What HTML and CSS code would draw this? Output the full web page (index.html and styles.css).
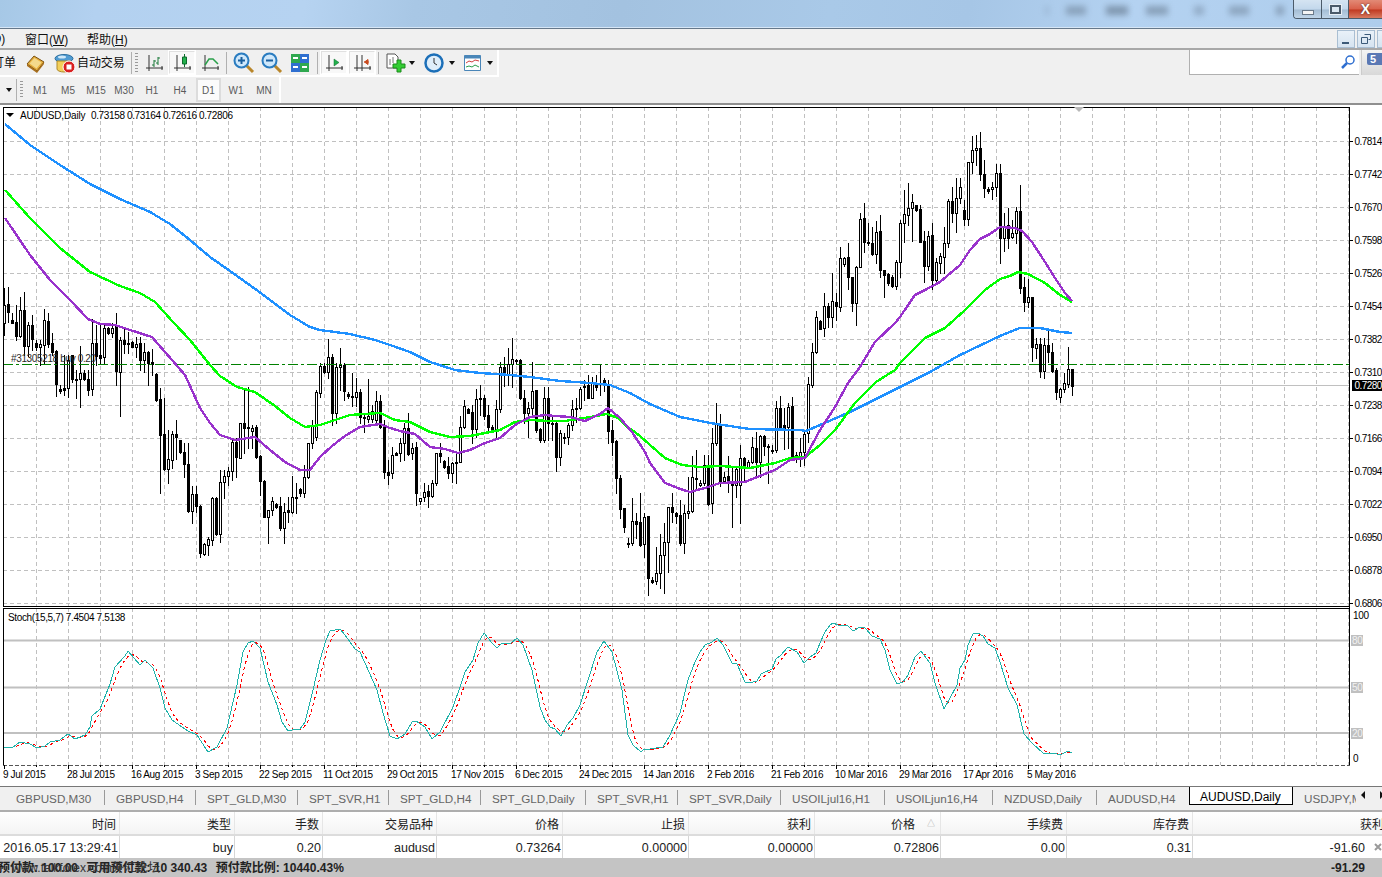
FILE: index.html
```html
<!DOCTYPE html>
<html lang="zh">
<head>
<meta charset="utf-8">
<title>AUDUSD,Daily</title>
<link rel="stylesheet" href="styles.css">
</head>
<body>
<header class="titlebar">
  <div class="blurs"><i class="b1"></i><i class="b2"></i><i class="b3"></i><i class="b4"></i><i class="b5"></i><i class="b6"></i><i class="b7"></i></div>
  <div class="winbtns">
    <span class="winbtn min"><i></i></span>
    <span class="winbtn max"><i></i></span>
    <span class="winbtn close">X</span>
  </div>
</header>
<nav class="menubar">
  <span class="menu-cut">(O)</span>
  <span class="menu-item">窗口(<u>W</u>)</span>
  <span class="menu-item">帮助(<u>H</u>)</span>
  <div class="mdi">
    <span class="mdibtn"><svg width="12" height="12" viewBox="0 0 12 12"><path d="M2 9h7v2H2z" fill="#3c5a78"/></svg></span>
    <span class="mdibtn"><svg width="12" height="12" viewBox="0 0 12 12"><path d="M4.5 1.5h6v5h-2M1.5 4.5h6v6h-6z" fill="none" stroke="#3c5a78"/></svg></span>
    <span class="mdibtn"></span>
  </div>
</nav>
<div class="toolbar">
  <div class="tools">
    <span class="order">订单</span>
    <span class="ico book"><svg width="20" height="20" viewBox="0 0 20 20"><path d="M1 11 8 3l10 6-7 9z" fill="#e5ad3c" stroke="#7a5212"/><path d="M3.500 10.500 8.500 5l7 4.500-5 6z" fill="#f4d98c"/><path d="M1 11l10 7 7-9v2l-7 9-10-7z" fill="#a86f1e"/></svg></span>
    <span class="ico auto"><svg width="22" height="22" viewBox="0 0 22 22"><ellipse cx="10" cy="6.500" rx="9" ry="4" fill="#4f9bd2" stroke="#2c6f9f"/><path d="M3 9h14v8a7 3 0 0 1-14 0z" fill="#f3cf5a" stroke="#b08a28"/><ellipse cx="8" cy="5" rx="4" ry="1.500" fill="#cfe8f8"/><circle cx="15" cy="15" r="6" fill="#d92020" stroke="#fff"/><path d="M12.500 12.500h5v5h-5z" fill="#fff"/></svg></span>
    <span class="auto-text">自动交易</span>
    <i class="sep s6"></i>
    <i class="grip"></i>
    <span class="tool"><svg width="22" height="22" viewBox="0 0 22 22"><path d="M6 3v16M3 16h17M19 14v4" fill="none" stroke="#333"/><path d="M11 8v7M9 13h2M11 9h2M15 5v8M13 11h2M15 6h2" fill="none" stroke="#1d7a3a"/></svg></span>
    <span class="tool on"><svg width="22" height="22" viewBox="0 0 22 22"><path d="M6 3v16M3 16h17M19 14v4" fill="none" stroke="#333"/><path d="M13.500 2v13" stroke="#0d6a2d"/><path d="M11.500 5h4v7h-4z" fill="#22b14c" stroke="#0d6a2d"/></svg></span>
    <span class="tool"><svg width="22" height="22" viewBox="0 0 22 22"><path d="M6 3v16M3 16h17M19 14v4" fill="none" stroke="#333"/><path d="M6 13 10 7l4 0 5 5" fill="none" stroke="#2aa04a" stroke-width="1.500"/></svg></span>
    <i class="sep s2 wide-after"></i>
    <span class="tool"><svg width="24" height="24" viewBox="0 0 24 24"><path d="m14 14 7 7" stroke="#b9862a" stroke-width="3"/><circle cx="9.500" cy="9.500" r="7" fill="#cfe8fb" stroke="#2a7cc0" stroke-width="2"/><path d="M6 9.500h7M9.500 6v7" stroke="#1a5f9e" stroke-width="2"/></svg></span>
    <span class="tool"><svg width="24" height="24" viewBox="0 0 24 24"><path d="m14 14 7 7" stroke="#b9862a" stroke-width="3"/><circle cx="9.500" cy="9.500" r="7" fill="#cfe8fb" stroke="#2a7cc0" stroke-width="2"/><path d="M6 9.500h7" stroke="#1a5f9e" stroke-width="2"/></svg></span>
    <span class="tool"><svg width="20" height="20" viewBox="0 0 20 20"><path d="M1 1h9v9H1z" fill="#2fa84f"/><path d="M10 1h9v9h-9z" fill="#2f6fd0"/><path d="M1 10h9v9H1z" fill="#2f6fd0"/><path d="M10 10h9v9h-9z" fill="#2fa84f"/><path d="M3 4h5v2H3zM12 4h5v2h-5zM3 13h5v2H3zM12 13h5v2h-5z" fill="#fff"/></svg></span>
    <i class="sep s3"></i>
    <span class="tool on"><svg width="22" height="22" viewBox="0 0 22 22"><path d="M6 3v16M3 16h17M19 14v4" fill="none" stroke="#333"/><path d="M11 7v7l5-3.500z" fill="#22b14c" stroke="#0d6a2d" stroke-width=".5"/></svg></span>
    <span class="tool on"><svg width="22" height="22" viewBox="0 0 22 22"><path d="M6 3v16M3 16h17M19 14v4M11 3v16" fill="none" stroke="#333"/><path d="M13 10h5M17 7.500l-3.500 2.500 3.500 2.500z" fill="#c84a1e" stroke="#c84a1e"/></svg></span>
    <i class="sep s2"></i>
    <span class="tool drop d1"><svg width="22" height="22" viewBox="0 0 22 22"><path d="M2 2h8l3 3v11H2z" fill="#fff" stroke="#555"/><path d="M5 7v6M8 5v6" stroke="#777"/><path d="M12 8h4v4h4v4h-4v4h-4v-4H8v-4h4z" fill="#32cd32" stroke="#1c8a1c"/></svg><i class="caret"></i></span>
    <span class="tool drop d2"><svg width="20" height="20" viewBox="0 0 20 20"><circle cx="10" cy="10" r="8.500" fill="#dfeefa" stroke="#1c6fb8" stroke-width="2.500"/><path d="M10 5v5l3 2" fill="none" stroke="#333"/></svg><i class="caret"></i></span>
    <span class="tool drop d3"><svg width="20" height="20" viewBox="0 0 20 20"><path d="M1.500 2.500h16v15h-16z" fill="#fff" stroke="#4a86b8"/><path d="M1.500 2.500h16v3h-16z" fill="#4a86b8"/><path d="M3 10l3-2 3 1 3-2 4 1" fill="none" stroke="#d04040"/><path d="M3 14l3-1 3 1 3-2 4 2" fill="none" stroke="#2aa04a"/></svg><i class="caret"></i></span>
  </div>
  <div class="search"><svg width="16" height="16" viewBox="0 0 16 16"><circle cx="10" cy="6" r="4" fill="none" stroke="#2f6fd0" stroke-width="1.500"/><path d="m7 9-5 5" stroke="#2f6fd0" stroke-width="2.500"/></svg></div>
  <div class="badge"><span>5</span></div>
</div>
<div class="periods">
  <div class="period-group">
    <i class="caret wide"></i>
    <i class="sep s7"></i>
    <i class="grip small"></i>
    <span class="period">M1</span>
    <span class="period">M5</span>
    <span class="period">M15</span>
    <span class="period">M30</span>
    <span class="period">H1</span>
    <span class="period">H4</span>
    <span class="period on">D1</span>
    <span class="period">W1</span>
    <span class="period">MN</span>
  </div>
</div>
<main id="chart" class="chart"></main>
<div class="tabbar">
  <div class="tabs">
    <span class="tab w100">GBPUSD,M30</span>
    <span class="tab w91">GBPUSD,H4</span>
    <span class="tab w102">SPT_GLD,M30</span>
    <span class="tab w91">SPT_SVR,H1</span>
    <span class="tab w92">SPT_GLD,H4</span>
    <span class="tab w105">SPT_GLD,Daily</span>
    <span class="tab w92">SPT_SVR,H1</span>
    <span class="tab w103">SPT_SVR,Daily</span>
    <span class="tab w104">USOILjul16,H1</span>
    <span class="tab w108">USOILjun16,H4</span>
    <span class="tab w104">NZDUSD,Daily</span>
    <span class="tab w92 last">AUDUSD,H4</span>
    <span class="tab active">AUDUSD,Daily</span>
    <span class="tab">USDJPY,M30</span>
  </div>
  <div class="tabnav"><i class="arrow-l"></i><i class="arrow-r"></i></div>
</div>
<section class="table">
  <div class="thead">
    <span>时间</span><span>类型</span><span>手数</span><span>交易品种</span><span>价格</span><span>止损</span><span>获利</span><span class="sorted">价格<i>△</i></span><span>手续费</span><span>库存费</span><span class="lastcol">获利</span>
  </div>
  <div class="trow">
    <span>2016.05.17 13:29:41</span><span>buy</span><span>0.20</span><span>audusd</span><span>0.73264</span><span>0.00000</span><span>0.00000</span><span>0.72806</span><span>0.00</span><span>0.31</span><span class="profit">-91.60</span>
    <svg class="closex" width="8" height="8" viewBox="0 0 8 8"><path d="m1 1 6 6M7 1 1 7" stroke="#9a9a9a" stroke-width="2"/></svg>
  </div>
</section>
<footer class="status">
  <span class="balance">预付款: 100.00</span>
  <span class="balance">可用预付款: 10 340.43</span>
  <span class="balance third">预付款比例: 10440.43%</span>
  <span class="watermark">www.talkforex.com外汇论坛</span>
  <span class="total">-91.29</span>
</footer>
<script src="chart.js"></script>
</body>
</html>
```
FILE: styles.css
```css
* { box-sizing: border-box; }
html, body { margin: 0; padding: 0; width: 1382px; height: 877px; overflow: hidden; background: #f0f0f0; }
body { font: 12px "Liberation Sans", "Noto Sans CJK SC", sans-serif; color: #111; display: flex; flex-direction: column; }
i { display: block; font-style: normal; }

.titlebar { height: 29px; flex: none; display: flex; align-items: flex-start; border-bottom: 1px solid #66788a; box-shadow: inset 0 -1px 0 #d6e6f6;
  background: linear-gradient(100deg, #a6c8e6 0%, #b3d1f0 7%, #b6d3f1 22%, #a8c7e5 30%, #a3c2e0 45%, #a9c9e8 60%, #a6c6e6 70%, #b4d2f1 82%, #aecdec 100%); }
.blurs { display: flex; margin-left: 1045px; margin-top: 6px; width: 248px; flex: none; }
.blurs i { height: 9px; background: #7c93ab; filter: blur(3px); flex: none; }
.b1 { width: 4px; opacity: .35; }
.b2 { width: 20px; margin-left: 17px; opacity: .75; }
.b3 { width: 22px; margin-left: 20px; opacity: .95; }
.b4 { width: 22px; margin-left: 18px; opacity: .8; }
.b5 { width: 10px; margin-left: 26px; opacity: .6; }
.b6 { width: 20px; margin-left: 25px; opacity: .7; }
.b7 { width: 8px; margin-left: 27px; opacity: .8; }
.winbtns { display: flex; flex: none; height: 19px; width: 89px; border: 1px solid #4c5b6a; border-top: 0; border-right: 0; border-radius: 0 0 0 4px; overflow: hidden; }
.winbtn { display: flex; align-items: center; justify-content: center; height: 18px; border-right: 1px solid #4c5b6a; background: linear-gradient(#d5e4f2, #c3d8ec 50%, #a4bdd4 55%, #c0d5e8); }
.min { width: 28px; }
.min i { width: 12px; height: 5px; margin-top: 6px; background: #f4f4f4; border: 1px solid #6a7a8a; }
.max { width: 27px; }
.max i { width: 11px; height: 9px; background: #dbe7f2; border: 2px solid #4a5a6a; box-shadow: 0 0 0 1px #e8eff6; }
.close { flex: 1; border: 0; color: #fff; font: bold 14px "Liberation Sans", sans-serif; text-shadow: 0 0 2px #333; background: linear-gradient(#e28a76, #d9604a 50%, #c03a22 55%, #d97a60); }

.menubar { height: 21px; flex: none; display: flex; align-items: center; border-bottom: 2px solid #a8a8a8; }
.menu-cut { margin-left: -12px; width: 37px; flex: none; }
.menu-item { width: 62px; flex: none; white-space: nowrap; }
.mdi { margin-left: auto; display: flex; gap: 2px; width: 45px; flex: none; margin-right: 0; height: 18px; align-self: flex-start; margin-top: 1px; }
.mdibtn { width: 18px; height: 18px; flex: none; border: 1px solid #a9bed2; background: linear-gradient(#e9f1f8, #d6e4f1); display: flex; align-items: center; justify-content: center; }

.toolbar { height: 27px; flex: none; display: flex; align-items: flex-start; }
.tools { width: 499px; height: 27px; flex: none; display: flex; align-items: center; border-right: 2px solid #fff; border-bottom: 2px solid #fff; }
.order { margin-left: -8px; width: 24px; flex: none; padding-bottom: 2px; }
.ico { display: flex; align-items: center; justify-content: center; flex: none; height: 22px; }
.book { width: 20px; margin-left: 10px; }
.auto { width: 22px; margin-left: 8px; }
.auto-text { margin-left: 1px; width: 48px; flex: none; white-space: nowrap; letter-spacing: -.1px; padding-bottom: 2px; }
.sep { width: 1px; height: 22px; background: #b0b0b0; flex: none; }
.s6 { margin-left: 6px; }
.s2 { margin-left: 2px; margin-right: 2px; }
.s2.wide-after { margin-right: 3px; }
.s3 { margin-left: 3px; margin-right: 2px; }
.s7 { margin-left: 4px; }
.grip { width: 3px; height: 20px; margin-left: 3px; margin-right: 2px; flex: none; background: repeating-linear-gradient(#9a9a9a 0 1px, transparent 1px 3px); }
.tool { width: 28px; height: 25px; flex: none; display: flex; align-items: center; justify-content: center; border: 2px solid transparent; }
.tool.on { border-color: #e0e0e0 #fff #fff #e0e0e0; background: #f8f8f8; outline: 1px solid #fff; outline-offset: -1px; }
.drop { position: relative; }
.d1 { width: 34px; justify-content: flex-start; margin-left: 2px; }
.d2 { width: 39px; margin-left: 2px; padding-right: 10px; }
.d3 { width: 36px; margin-left: 1px; padding-right: 8px; }
.caret { width: 0; height: 0; border-left: 3.5px solid transparent; border-right: 3.5px solid transparent; border-top: 4px solid #111; flex: none; }
.drop .caret { position: absolute; right: 0; top: 9px; }
.d2 .caret { right: 1px; }
.search { margin-left: 690px; width: 170px; height: 25px; flex: none; background: #fff; border-left: 1px solid #b0b0b0; border-bottom: 1px solid #b0b0b0; display: flex; align-items: center; justify-content: flex-end; padding-right: 3px; margin-top: 0; }
.badge { margin-left: 2px; flex: 1; height: 25px; border-left: 1px solid #ccc; background: linear-gradient(#f4f4f4, #d8d8d8); padding: 3px 0 0 5px; }
.badge span { display: block; height: 12px; background: #5a78b4; border-radius: 2px 0 0 2px; color: #fff; font: bold 11px/12px "Liberation Sans", sans-serif; padding-left: 3px; }

.periods { height: 28px; flex: none; border-bottom: 2px solid #8f8f8f; }
.period-group { width: 281px; height: 26px; display: flex; align-items: center; border-right: 2px solid #fff; }
.caret.wide { margin-left: 6px; }
.grip.small { height: 18px; width: 3px; margin-left: 3px; margin-right: 0; }
.period { width: 28px; height: 24px; flex: none; display: flex; align-items: center; justify-content: center; color: #5a5a5a; font-size: 10px; }
.period:first-of-type { margin-left: 3px; }
.period.on { border: 2px solid #dcdcdc; background: #fbfbfb; width: 25px; margin: 0 1px 0 2px; }

.chart { height: 681px; flex: none; background: #fff; overflow: hidden; }
.chart svg { display: block; }
.chart text { font: 10px "Liberation Sans", sans-serif; fill: #000; letter-spacing: -.36px; }
.chart text.caption { letter-spacing: -.15px; }
.chart text.price { letter-spacing: -.55px; }
.chart text.current { fill: #fff; letter-spacing: -.55px; }
.chart text.level { fill: #f2f2f2; }
.chart text.order-label { fill: #2a2a2a; }
.crisp { shape-rendering: crispEdges; }

.tabbar { height: 26px; flex: none; display: flex; border-top: 1px solid #777; border-bottom: 2px solid #aeaeae; box-shadow: 0 -2px 0 #fff; }
.tabs { width: 1356px; display: flex; overflow: hidden; flex: none; padding-left: 5px; height: 19px; margin-bottom: 4px; }
.tab { flex: none; padding-left: 11px; color: #666; font-size: 11.700px; border-right: 1px solid #999; height: 15px; margin-top: 3px; line-height: 17px; white-space: nowrap; }
.w91 { width: 91px; }
.w92 { width: 92px; }
.w100 { width: 100px; }
.w102 { width: 102px; }
.w103 { width: 103px; }
.w104 { width: 104px; }
.w105 { width: 105px; }
.w108 { width: 108px; }
.tab.last { border-right: 0; }
.tab.active { color: #000; background: #fff; border: 1px solid #000; border-top: 0; width: 104px; height: 18px; margin-top: 0; line-height: 21px; padding-left: 10px; font-size: 12px; }
.tabnav { flex: 1; display: flex; align-items: center; justify-content: space-between; padding: 0 0 4px 4px; height: 19px; }
.arrow-l { width: 0; height: 0; border: 4px solid transparent; border-left: 0; border-right: 4px solid #111; margin-left: 1px; }
.arrow-r { width: 0; height: 0; border: 4px solid transparent; border-right: 0; border-left: 4px solid #111; margin-right: -2px; }

.table { flex: none; background: #fff; font-size: 12.500px; position: relative; }
.thead, .trow { display: grid; grid-template-columns: 120px 115px 88px 114px 126px 126px 126px 126px 126px 126px 189px; }
.thead { height: 24px; border-bottom: 2px solid #dcdcdc; background: linear-gradient(#ffffff, #f4f4f4); }
.thead span { text-align: right; padding-right: 3px; line-height: 26px; height: 22px; border-right: 1px solid #e6e6e6; color: #222; font-size: 12px; white-space: nowrap; }
.thead .sorted { position: relative; padding-right: 25px; }
.sorted i { position: absolute; right: 5px; top: 0; color: #aaa; font-size: 8px; line-height: 24px; }
.thead .lastcol { padding-right: 0; margin-right: -2px; border: 0; }
.trow { height: 22px; position: relative; }
.trow span { text-align: right; padding-right: 1px; line-height: 25px; height: 22px; border-right: 1px solid #d6d6d6; white-space: nowrap; color: #222; }
.trow .profit { padding-right: 17px; border: 0; }
.closex { position: absolute; right: 0; top: 7px; }

.status { height: 19px; flex: none; background: #c4c4c4; display: flex; position: relative; font-weight: bold; font-size: 12px; line-height: 21px; color: #222; white-space: nowrap; }
.balance { flex: none; margin-right: 8.500px; }
.balance:first-child { margin-left: -2px; }
.watermark { position: absolute; left: 12px; top: 0; font-weight: normal; color: #333; }
.total { position: absolute; right: 17px; top: 0; }
```
FILE: chart.js
```js
// Chart geometry: coordinates below are page pixels; the SVG viewBox starts at the top of the chart area.
var LEFT = 3, RIGHT = 1349, TOP = 107, MAIN_BOTTOM = 606, SUB_TOP = 608, SUB_BOTTOM = 765;
var GROUPS = [
 [4, 280, "25,75,128,165,1;22,72,95,125,0;100,120,128,128,0;75,125,168,180,0;50,90,168,172,1;35,90,198,225,0;125,135,198,228,1;105,135,178,210,0;180,190,200,210,0;180,193,200,255,1;88,120,195,250,1;100,122,192,200,0;160,188,215,225,0;210,213,312,348,0;315,327,332,338,0;225,325,330,345,0;225,240,325,352,1;225,225,298,305,0;270,297,300,355,0;198,280,298,382,1;270,280,298,300,0;270,298,330,345,0;118,190,328,345,1;135,190,228,255,0;135,225,233,250,0;135,145,232,250,1;140,145,158,162,0;130,145,158,172,1;100,138,272,315,0;170,180,275,408,1;145,180,192,220,0;155,188,190,218,0;182,187,200,202,0;170,193,200,230,1;170,190,240,270,0;190,215,240,275,1;212,215,248,315,0;208,247,252,285,0;280,282,360,362,0;325,358,465,638,0;355,463,568,570,0;450,538,568,608,1;452,462,540,565,1;420,462,470,538,0;480,480,515,520,0;490,515,553,592,0;490,553,692,695,0;618,642,692,730,1;618,642,678,695,0;675,678,820,830,0;790,792,822,825,1;772,778,794,825,1;650,654,780,795,1;650,655,762,765,0;570,605,762,785,1;570,588,605,655,1;560,572,588,615,1;480,485,572,600,1;475,485,532,590,0;430,430,533,535,1;330,430,445,520,0;320,440,445,505,1;435,445,452,505,1;435,442,530,535,0;525,528,602,645,0;600,602,710,712,0;690,690,710,790,1;650,664,690,705,1;668,673,680,685,0;650,678,745,750,0;670,697,745,790,1;650,690,695,725,0;588,652,695,700,1;610,650,652,700,0;625,628,640,648,0;555,590,640,650,1;488,488,590,595,1;420,435,488,505,1;330,337,472,480,1;250,257,338,350,1"],
 [324, 330, "100,108,125,128,0;28,82,125,145,1;72,82,250,285,0;100,112,250,280,1;55,106,112,180,1;100,105,182,210,0;185,192,198,205,0;130,197,199,228,0;145,187,200,228,1;178,187,262,278,0;255,262,264,305,0;148,257,267,275,1;225,243,268,275,1;183,213,270,280,1;195,213,290,295,0;270,290,425,445,0;390,425,435,462,0;350,375,430,445,1;365,370,374,375,0;325,340,370,392,1;280,295,340,390,1;250,295,372,375,0;340,355,370,388,1;335,352,488,525,0;505,503,512,522,1;458,485,502,512,1;465,483,498,532,0;450,460,497,500,1;370,370,460,465,1;340,370,378,395,0;390,393,410,415,0;380,408,428,445,0;395,400,428,455,1;370,395,400,460,1;258,292,395,395,1;210,228,292,295,1;235,238,248,250,0;225,245,298,340,0;178,208,298,320,1;165,204,206,255,0;195,205,258,268,0;225,255,292,310,0;285,290,302,305,0;210,238,302,320,1;95,112,238,245,1;80,112,135,168,0;55,102,135,165,1;25,88,102,170,1;88,90,94,100,0;88,90,203,208,0;180,205,250,280,0;215,235,250,320,1;95,182,235,260,1;180,180,300,305,0;295,298,330,335,0;170,205,330,335,1;170,205,280,330,0;255,280,283,330,1;275,278,380,422,0;300,308,380,405,1;310,322,323,340,0;280,284,322,342,1;210,238,284,300,1;205,235,238,275,0;170,178,235,238,1;150,167,172,210,1;135,165,203,205,0;140,158,203,205,1;135,158,170,180,0;105,160,163,195,0;145,150,165,182,0;150,165,302,340,0;270,300,335,375,0;330,333,445,488,0;435,445,537,565,0;535,535,590,605,0;625,640,643,652,0;505,574,640,645,1;550,574,583,625,0;488,576,645,648,0;550,560,643,680,1;558,558,745,795,0"],
 [652, 190, "1160,1170,1175,1180,0;1070,1150,1172,1182,1;1033,1095,1150,1195,1;1000,1055,1095,1210,1;950,952,1057,1145,1;908,952,965,995,0;965,970,977,1000,0;930,975,1060,1065,0;945,970,1060,1088,1;860,962,970,985,1;798,862,962,965,1;780,863,866,900,0;870,880,886,888,1;795,826,880,885,1;795,826,942,945,0;715,760,940,970,1;640,703,760,765,1;672,708,875,888,0;845,860,872,880,1;798,858,872,905,0;828,872,885,1010,0;835,838,885,920,1;765,805,885,998,1;800,805,830,870,0;810,816,830,835,1;740,772,815,820,1;725,775,815,860,0;735,737,815,860,1;735,737,768,795,0;762,767,770,880,0;765,779,781,788,0;632,655,780,785,1;618,655,710,715,0;655,706,713,778,0;640,650,712,775,1;622,648,798,810,0;785,796,802,815,0;745,785,800,828,1;722,732,785,825,1;560,583,728,755,1;460,485,585,590,1;362,380,485,490,1;390,393,416,418,0;308,347,415,438,1;340,347,380,412,0;250,332,380,412,1;310,335,347,390,0;172,205,350,362,1;200,203,222,228,1;160,202,262,298,0;260,262,340,362,0;228,230,340,405,1;70,88,230,232,1;40,85,155,185,0;100,157,160,165,0;112,160,193,195,0;92,125,192,218,1;75,124,240,260,0;240,240,255,320,0;250,253,280,285,0;255,260,287,290,0;210,215,287,298,1;90,100,215,260,1"],
 [904, 125, "195,268,295,350,1;175,250,270,300,1;207,232,250,348,1;240,240,255,258,0;240,253,350,352,0;318,348,422,470,0;318,332,422,435,1;295,330,465,492,0;400,410,465,470,1;385,393,415,445,1;305,355,395,445,1;222,228,355,365,1;185,228,265,290,0;158,220,265,320,1;160,187,220,235,1;225,255,283,300,0;112,112,283,300,1;32,76,112,145,1;30,70,76,120,1;22,70,147,165,0;105,147,190,215,0;185,192,197,205,0;170,187,193,222,1;118,145,187,212,1;118,145,340,415,0;265,302,340,378,1;250,300,340,370,0;285,325,335,340,1;245,258,325,355,1;180,258,488,505,0;455,486,532,558,0;462,517,532,545,1;515,516,665,708,0;640,657,670,700,1;640,657,738,755,0;640,660,738,760,1;618,660,682,710,0;655,682,738,740,0;730,735,800,822,0;790,793,815,830,1;745,775,793,800,1;665,733,778,785,1;733,733,782,810,0"]
];
var BLUE = "5,124 30,145 60,165 90,184 120,199 150,212 170,224 190,240 210,257 230,271 258,291 290,315 310,327 320,330 350,334 375,340 390,345 410,352 430,362 455,370 480,373 510,375 530,377 560,381 590,383 610,385 630,393 650,404 680,417 716,424 750,429 800,430 806,431 820,425 850,412 880,397 900,387 930,372 960,355 1000,336 1020,328 1040,328 1060,332 1072,333";
var GREEN = "5,190 30,218 60,248 90,272 120,286 140,293 155,302 173,322 190,340 210,365 220,376 237,387 255,392 275,406 290,418 305,427 320,425 335,420 350,415 380,413 395,420 410,422 430,432 450,437 470,436 485,433 500,430 515,422 530,420 550,421 565,421 590,417 607,414 618,418 625,425 640,436 650,445 665,458 682,465 700,467 720,466 750,468 775,463 790,458 805,457 820,445 835,430 855,403 876,382 895,370 900,363 925,338 945,328 965,310 985,290 1000,279 1010,276 1018,272 1028,274 1045,283 1060,295 1072,302";
var PURPLE = "5,218 30,255 50,280 70,300 88,319 100,324 115,325 130,330 152,337 165,352 185,375 200,408 210,423 220,435 235,440 255,437 270,450 285,462 300,470 310,470 320,457 332,446 345,436 360,427 380,424 390,428 400,431 415,434 430,447 445,449 458,453 470,450 485,443 500,438 515,425 530,417 545,415 555,416 570,417 585,421 600,414 608,408 620,418 632,432 645,452 650,463 665,483 680,489 690,492 705,488 720,483 745,482 765,474 775,470 790,460 805,458 820,430 835,407 848,383 860,367 875,342 895,323 900,317 915,295 925,290 940,282 960,265 970,250 980,239 990,234 1000,227 1015,228 1022,231 1032,242 1045,262 1055,278 1065,293 1072,301";
var STOCH = "4,748 13,747 20,742 30,744 37,748 45,746 50,742 60,740 68,734 75,739 85,735 90,727 92,716 100,709 110,684 115,667 125,656 128,651 140,665 145,660 153,668 160,688 165,708 172,720 182,727 188,731 197,735 208,752 217,747 227,728 237,685 243,652 248,643 253,641 260,648 268,682 277,705 282,722 288,731 297,729 300,729 305,722 313,690 320,660 326,640 330,631 340,629 345,635 355,649 360,652 365,663 377,690 383,713 390,736 397,739 405,734 412,722 416,721 425,727 432,739 440,732 453,707 460,687 465,672 473,660 478,643 484,633 492,643 497,648 502,643 510,644 517,638 523,645 532,670 540,707 545,720 550,727 555,729 561,736 567,725 573,718 580,705 588,680 597,652 604,641 612,652 622,690 628,735 633,745 641,752 643,750 663,747 670,735 680,713 688,680 695,662 700,652 705,645 712,642 717,638 723,645 732,663 737,664 745,682 749,683 757,681 761,674 772,669 776,659 781,655 788,647 797,652 804,663 810,657 816,653 820,643 825,632 830,625 833,623 838,625 847,625 853,631 860,627 865,628 872,636 880,639 885,650 890,670 897,684 903,682 908,675 915,657 921,651 930,663 935,683 944,709 950,698 957,685 960,668 965,660 968,645 973,634 978,633 983,636 988,644 995,648 1000,662 1008,688 1017,705 1024,734 1032,743 1044,754 1047,753 1057,754 1062,754 1068,751 1072,753";
var PRICES = ["0.7814","0.7742","0.7670","0.7598","0.7526","0.7454","0.7382","0.7310","0.7238","0.7166","0.7094","0.7022","0.6950","0.6878","0.6806"];
var DATES = ["9 Jul 2015","28 Jul 2015","16 Aug 2015","3 Sep 2015","22 Sep 2015","11 Oct 2015","29 Oct 2015","17 Nov 2015","6 Dec 2015","24 Dec 2015","14 Jan 2016","2 Feb 2016","21 Feb 2016","10 Mar 2016","29 Mar 2016","17 Apr 2016","5 May 2016"];

function line(x1, y1, x2, y2, color, extra) {
  return '<line x1="' + x1 + '" y1="' + y1 + '" x2="' + x2 + '" y2="' + y2 + '" stroke="' + color + '" ' + (extra || '') + '/>';
}
function text(x, y, s, cls) {
  return '<text x="' + x + '" y="' + y + '"' + (cls ? ' class="' + cls + '"' : '') + '>' + s + '</text>';
}
function poly(points, color, width, extra) {
  return '<polyline fill="none" class="crisp" points="' + points + '" stroke="' + color + '" stroke-width="' + width + '" ' + (extra || '') + '/>';
}
function candles() {
  var black = '', hole = '';
  GROUPS.forEach(function (g) {
    var x = g[0];
    g[2].split(';').forEach(function (c) {
      var v = c.split(',').map(Number);
      var hi = Math.round(g[1] + v[0] / 3), top = Math.round(g[1] + v[1] / 3), bot = Math.round(g[1] + v[2] / 3), lo = Math.round(g[1] + v[3] / 3);
      if (bot <= top) bot = top + 1;
      black += 'M' + x + ' ' + hi + 'h1V' + (lo + 1) + 'h-1z';
      black += 'M' + (x - 1) + ' ' + top + 'h3V' + (bot + 1) + 'h-3z';
      if (v[4] && bot - top >= 2) hole += 'M' + x + ' ' + (top + 1) + 'h1V' + bot + 'h-1z';
      x += 4;
    });
  });
  return '<path class="crisp" fill="#000" d="' + black + '"/><path class="crisp" fill="#fff" d="' + hole + '"/>';
}
function signalLine() {
  var pts = STOCH.split(' ').map(function (p) { return p.split(',').map(Number); });
  var vals = [], j = 0;
  for (var x = 4; x <= 1072; x += 4) {
    while (j < pts.length - 2 && pts[j + 1][0] < x) j++;
    var a = pts[j], b = pts[j + 1];
    vals.push(a[1] + (b[1] - a[1]) * (x - a[0]) / (b[0] - a[0]));
  }
  var out = [];
  vals.forEach(function (v, i) {
    var p = vals[Math.max(0, i - 1)], q = vals[Math.max(0, i - 2)];
    out.push((4 + i * 4) + ',' + ((v + p + q) / 3).toFixed(1));
  });
  return out.join(' ');
}
function build() {
  var s = '', i, y, x;
  var grid = '#c0c0c0', dash = 'stroke-dasharray="4 3"';
  // grid
  for (x = 36.5; x < RIGHT; x += 32) {
    s += line(x, TOP, x, MAIN_BOTTOM, grid, dash);
    s += line(x, SUB_TOP, x, SUB_BOTTOM, grid, dash);
  }
  for (i = 0; i < PRICES.length; i++) {
    y = 141.5 + 33 * i;
    s += line(LEFT, y, RIGHT, y, grid, dash);
  }
  // current price and order lines
  s += line(LEFT, 385.5, RIGHT, 385.5, '#c0c0c0');
  s += candles();
  s += line(LEFT, 364.5, RIGHT, 364.5, '#008000', 'stroke-dasharray="10 3 3 3"');
  s += poly(BLUE, '#1e90ff', 2.4);
  s += poly(GREEN, '#00ff00', 2.4);
  s += poly(PURPLE, '#9932cc', 2.4);
  s += text(11, 362, '#31305218 buy 0.20', 'order-label');
  // stochastic
  [640.5, 687.5, 733].forEach(function (ly) { s += line(LEFT, ly, RIGHT, ly, '#c0c0c0', 'stroke-width="2"'); });
  s += poly(signalLine(), '#ff0000', 1, 'stroke-dasharray="3 3"');
  s += poly(STOCH, '#20b2aa', 1);
  // frames
  s += '<g stroke="#000" class="crisp">';
  s += line(LEFT + .5, TOP, LEFT + .5, MAIN_BOTTOM);
  s += line(LEFT + .5, SUB_TOP, LEFT + .5, SUB_BOTTOM);
  s += line(LEFT, TOP + .5, RIGHT + 1, TOP + .5);
  s += line(LEFT, MAIN_BOTTOM + .5, RIGHT + 1, MAIN_BOTTOM + .5);
  s += line(LEFT, SUB_TOP + .5, RIGHT + 1, SUB_TOP + .5);
  s += line(RIGHT + .5, TOP, RIGHT + .5, SUB_BOTTOM + 1);
  s += '</g>';
  s += line(LEFT, SUB_BOTTOM + .5, RIGHT + 1, SUB_BOTTOM + .5, '#555', 'stroke-dasharray="4 2"');
  // price axis
  PRICES.forEach(function (p, n) {
    y = 141.5 + 33 * n;
    s += line(RIGHT, y, RIGHT + 4, y, '#000');
    s += text(1354.5, y + 3.5, p, 'price');
  });
  s += '<rect x="1352" y="380" width="30" height="11" fill="#000"/>';
  s += text(1354.5, 389, '0.7280', 'current');
  // stochastic axis
  s += text(1353, 619, '100');
  s += text(1353, 762, '0');
  [[640, '80'], [687, '50'], [733, '20']].forEach(function (l) {
    s += '<rect x="1351" y="' + (l[0] - 5) + '" width="12" height="11" fill="#c0c0c0"/>';
    s += text(1352, l[0] + 4, l[1], 'level');
  });
  s += '<polygon points="1074,107 1084,107 1079,112" fill="#b8b8b8"/>';
  // date axis
  DATES.forEach(function (d, n) {
    var tx = 4.5 + 64 * n;
    s += line(tx, SUB_BOTTOM, tx, SUB_BOTTOM + 4, '#000');
    s += line(tx + 32, SUB_BOTTOM, tx + 32, SUB_BOTTOM + 2, '#000');
    s += text(3 + 64 * n, 778, d);
  });
  // captions
  s += '<polygon points="6,113 14,113 10,117" fill="#000"/>';
  s += text(20, 119, 'AUDUSD,Daily', 'caption');
  s += text(91, 119, '0.73158') + text(127, 119, '0.73164') + text(163, 119, '0.72616') + text(199, 119, '0.72806');
  s += text(8, 621, 'Stoch(15,5,7) 7.4504 7.5138');
  document.getElementById('chart').innerHTML =
    '<svg width="1382" height="681" viewBox="0 105 1382 681" xmlns="http://www.w3.org/2000/svg">' + s + '</svg>';
}
build();
```
